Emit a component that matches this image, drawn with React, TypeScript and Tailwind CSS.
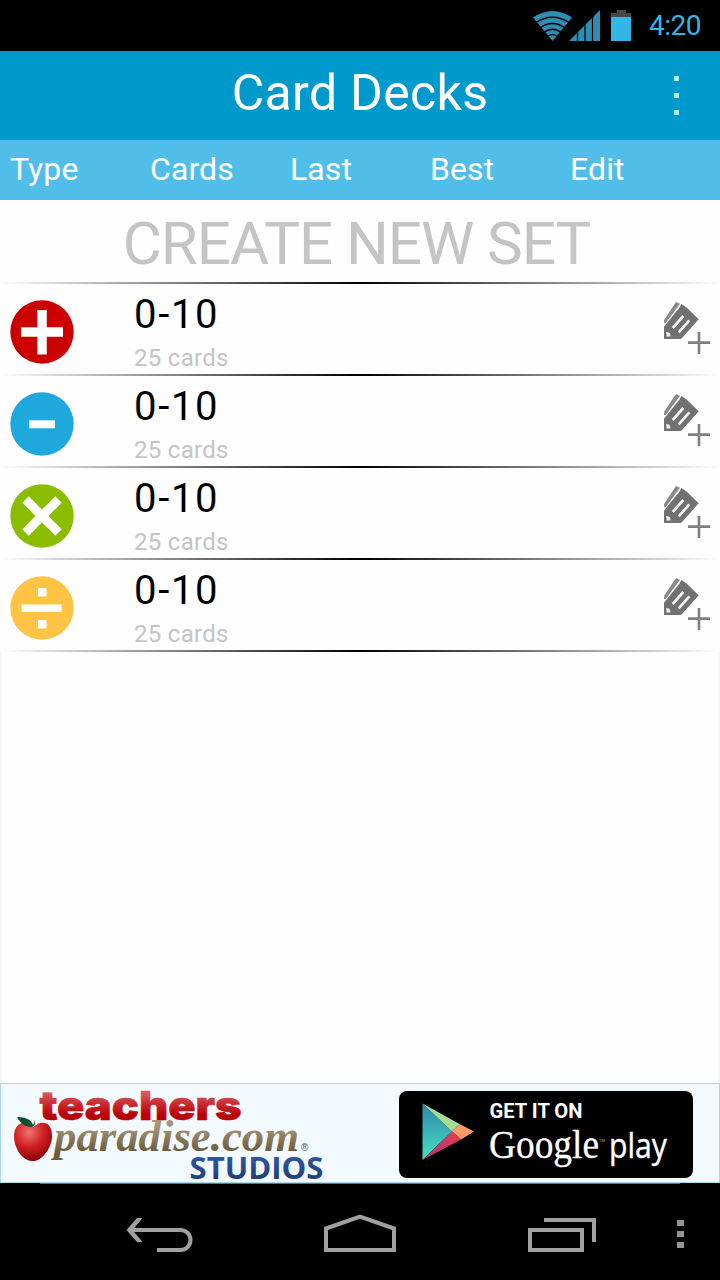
type Operation = 'add' | 'subtract' | 'multiply' | 'divide';

interface Deck {
  operation: Operation;
  range: string;
  cards: number;
}

const COLUMNS = ['Type', 'Cards', 'Last', 'Best', 'Edit'];

const DECKS: Deck[] = [
  { operation: 'add', range: '0-10', cards: 25 },
  { operation: 'subtract', range: '0-10', cards: 25 },
  { operation: 'multiply', range: '0-10', cards: 25 },
  { operation: 'divide', range: '0-10', cards: 25 },
];

function StatusBar() {
  return (
    <div className="flex h-[51px] items-start justify-end bg-black pr-[19px]">
      <svg className="mt-[10px]" width="100" height="32" viewBox="0 0 100 32">
        <path d="M20.5 31 L1 7.5 Q20.5 -5.5 40 7.5 Z" fill="#2d8db3" />
        <g fill="none" stroke="#000" strokeWidth="1.3">
          <path d="M3 13 Q20.5 1.500 38 13" />
          <path d="M7 18.500 Q20.5 8.500 34 18.500" />
          <path d="M11 23 Q20.5 15.500 30 23" />
          <path d="M15 27 Q20.5 22 26 27" />
        </g>
        <path d="M37 31 L68 0 V31 Z" fill="#2d8db3" />
        <path d="M45.5 0V31M53 0V31M60.5 0V31" stroke="#000" strokeWidth="1.2" />
        <path d="M85 0h9v3h5v5H79V3h6z" fill="#474747" />
        <path d="M79 7h20v24H79z" fill="#33b5e5" />
      </svg>
      <span className="ml-[17px] text-[28px] leading-[51px] tracking-[-0.5px] text-[#33b5e5]">4:20</span>
    </div>
  );
}

function OperationIcon({ operation }: { operation: Operation }) {
  return (
    <svg className="mt-4 ml-[10px] shrink-0" width="64" height="64" viewBox="0 0 64 64">
      {operation === 'add' && (
        <>
          <circle cx="32" cy="32" r="31.7" fill="#cc0000" />
          <path d="M32 10V54.5M11 32H53" stroke="#fff" strokeWidth="9.5" />
        </>
      )}
      {operation === 'subtract' && (
        <>
          <circle cx="32" cy="32" r="31.7" fill="#1fa8dc" />
          <path d="M19 32.3H45" stroke="#fff" strokeWidth="8" />
        </>
      )}
      {operation === 'multiply' && (
        <>
          <circle cx="32" cy="32" r="31.7" fill="#8abd00" />
          <path d="M15.5 15.5L48.5 48.5M48.5 15.5L15.5 48.5" stroke="#fff" strokeWidth="9" />
        </>
      )}
      {operation === 'divide' && (
        <>
          <circle cx="32" cy="32" r="31.7" fill="#ffc444" />
          <path d="M11.5 32.3H51.5" stroke="#fff" strokeWidth="7.5" />
          <path d="M28 12h8.5v8.5H28zM28 44h8.5v8.5H28z" fill="#fff" />
        </>
      )}
    </svg>
  );
}

function EditIcon() {
  return (
    <svg className="mt-[18px] mr-[10px] ml-auto shrink-0" width="46" height="52" viewBox="0 0 138 156">
      <path d="M36 0L48 5L6 62L0 64V54Z" fill="#8a8a8a" />
      <path d="M52 6L66 15L104 52L55 107L50 111H0V74L46 17Z" fill="#717171" />
      <path d="M26 78L58 42M44 91L76 55" stroke="#f4f4f4" strokeWidth="8" />
      <path d="M6 90L17 92L20 103L8 104Z" fill="#e8e8e8" />
      <path d="M105 90V156M72 122H138" stroke="#808080" strokeWidth="8" />
    </svg>
  );
}

function Divider() {
  return <div className="h-[2px] bg-linear-to-r from-transparent via-black to-transparent" />;
}

function DeckRow({ deck }: { deck: Deck }) {
  return (
    <>
      <div className="flex h-[90px]">
        <OperationIcon operation={deck.operation} />
        <div className="ml-[60px] pt-[7px]">
          <div className="text-[40px] leading-[47px] tracking-[1.7px] text-black">{deck.range}</div>
          <div className="mt-1 text-[24px] leading-[32px] tracking-[0.3px] text-[#c4c4c4]">{deck.cards} cards</div>
        </div>
        <EditIcon />
      </div>
      <Divider />
    </>
  );
}

function TeachersLogo() {
  return (
    <svg className="overflow-visible" width="340" height="98" viewBox="1 1084 340 98">
      <defs>
        <linearGradient id="red" x1="0" y1="0" x2="0" y2="1">
          <stop offset="0.25" stopColor="#d9575c" />
          <stop offset="0.7" stopColor="#b90007" />
        </linearGradient>
        <linearGradient id="tan" x1="0" y1="0" x2="0" y2="1">
          <stop offset="0.3" stopColor="#a69679" />
          <stop offset="0.8" stopColor="#6c5c3c" />
        </linearGradient>
        <linearGradient id="blue" x1="0" y1="0" x2="0" y2="1">
          <stop offset="0.2" stopColor="#3158a8" />
          <stop offset="0.8" stopColor="#203f7a" />
        </linearGradient>
        <radialGradient id="apple" cx="0.4" cy="0.25" r="0.75">
          <stop offset="0" stopColor="#ed7770" />
          <stop offset="0.5" stopColor="#d12226" />
          <stop offset="1" stopColor="#8d0006" />
        </radialGradient>
      </defs>
      <text x="39.500" y="1119.500" textLength="202" lengthAdjust="spacingAndGlyphs" fill="url(#red)" stroke="url(#red)" strokeWidth="0.6" className="font-['Inter',sans-serif] text-[40px] font-black">
        teachers
      </text>
      <path d="M33 1127C26 1118 14 1123 14 1136C14 1149 23 1161 32 1161C42 1162 53 1147 52 1134C51 1121 41 1120 33 1127Z" fill="url(#apple)" />
      <path d="M17 1117C26 1117 32 1120 33 1125C35 1123 34 1121 35 1120C35 1124 35 1126 32 1127C25 1127 20 1123 17 1117Z" fill="#0c5037" />
      <text x="54" y="1151" textLength="245" lengthAdjust="spacingAndGlyphs" fill="url(#tan)" className="font-['Liberation_Serif',serif] text-[44px] font-bold italic">
        paradise.com
      </text>
      <text x="301" y="1151" fill="#555" className="font-['Liberation_Sans',sans-serif] text-[10px]">
        ®
      </text>
      <text x="189.500" y="1178.500" textLength="134" lengthAdjust="spacingAndGlyphs" fill="url(#blue)" className="font-['Open_Sans',sans-serif] text-[31px] font-bold">
        STUDIOS
      </text>
    </svg>
  );
}

function PlayBadge() {
  return (
    <svg className="mt-[7px] mr-[26px]" width="294" height="87" viewBox="399 1091 294 87">
      <defs>
        <linearGradient id="cyan" x1="0" y1="0" x2="0" y2="1">
          <stop offset="0" stopColor="#2f88ad" />
          <stop offset="1" stopColor="#48e0bf" />
        </linearGradient>
        <linearGradient id="pink" x1="1" y1="0" x2="0" y2="1">
          <stop offset="0" stopColor="#e73d4c" />
          <stop offset="1" stopColor="#a9348e" />
        </linearGradient>
      </defs>
      <rect x="399" y="1091" width="294" height="87" rx="8" fill="#000" />
      <path d="M422.500 1103.500L452 1131.500L422.500 1160Z" fill="url(#cyan)" />
      <path d="M422.500 1103.500L459.500 1124L452 1131.500Z" fill="#a5dc94" />
      <path d="M459.500 1124L474 1131.500L461 1139.500L452 1131.500Z" fill="#fa9b68" />
      <path d="M452 1131.500L461 1139.500L422.500 1160Z" fill="url(#pink)" />
      <text x="489.500" y="1118" textLength="93" lengthAdjust="spacingAndGlyphs" fill="#fff" className="text-[20px] font-bold">
        GET IT ON
      </text>
      <text x="489" y="1158" textLength="110" lengthAdjust="spacingAndGlyphs" fill="#fff" stroke="#fff" strokeWidth="0.3" className="font-['Liberation_Serif',serif] text-[40px]">
        Google
      </text>
      <text x="599" y="1142" fill="#aaa" className="text-[4px]">
        TM
      </text>
      <text x="609" y="1158" textLength="58" lengthAdjust="spacingAndGlyphs" fill="#fff" stroke="#fff" strokeWidth="0.4" className="font-['Open_Sans',sans-serif] text-[34px]">
        play
      </text>
    </svg>
  );
}

function NavigationBar() {
  return (
    <div className="bg-black">
      <div className="mx-10 h-px bg-[#3f78c8]" />
      <div className="flex h-[96px] items-start pt-[30px]">
        <svg className="ml-[126px]" width="68" height="40" viewBox="126 1214 68 40" fill="none" stroke="#a0a0a0" strokeWidth="4">
          <path d="M129 1230H180.500A10 10 0 0 1 180.500 1250H157" />
          <path d="M126.500 1230L137 1218H142.500L132.500 1230L142.500 1242H137Z" fill="#a0a0a0" stroke="none" />
        </svg>
        <svg className="ml-[128px]" width="76" height="40" viewBox="322 1214 76 40" fill="none" stroke="#a0a0a0" strokeWidth="4">
          <path d="M326 1250V1228.500L360 1216.500L394 1228.500V1250Z" />
        </svg>
        <svg className="ml-[128px]" width="72" height="40" viewBox="526 1214 72 40" fill="none" stroke="#a0a0a0" strokeWidth="4">
          <path d="M530 1230H582V1250H530ZM544 1220H594V1242" />
        </svg>
        <div className="mt-[6px] ml-[79px] flex flex-col gap-[5px]">
          <span className="h-[6px] w-[7px] bg-[#949494]" />
          <span className="h-[6px] w-[7px] bg-[#949494]" />
          <span className="h-[6px] w-[7px] bg-[#949494]" />
        </div>
      </div>
    </div>
  );
}

export default function App() {
  return (
    <main className="flex h-[1280px] w-[720px] flex-col overflow-hidden bg-[#fefefe] font-['Roboto',sans-serif]">
      <StatusBar />

      <header className="flex h-[89px] items-start bg-[#0099cc] text-white">
        <div className="w-[60px]" />
        <h1 className="flex-1 text-center text-[50px] leading-[84px] tracking-[0.3px]">Card Decks</h1>
        <button className="mt-[25px] flex w-[60px] flex-col gap-3 pl-[14px]" aria-label="More options">
          <span className="h-[5px] w-[5px] bg-[#b5f0ff]" />
          <span className="h-[5px] w-[5px] bg-[#b5f0ff]" />
          <span className="h-[5px] w-[5px] bg-[#b5f0ff]" />
        </button>
      </header>

      <div className="flex h-[60px] bg-[#50bee8] pl-[10px] text-[32px] leading-[58px] text-white">
        {COLUMNS.map((c) => (
          <div key={c} className="w-[140px] tracking-[0.1px]">{c}</div>
        ))}
      </div>

      <button className="h-[82px] pr-[7px] pt-[4px] text-center text-[60px] leading-[77px] tracking-[-1px] text-[#c4c4c4]">CREATE NEW SET</button>
      <Divider />

      {DECKS.map((deck) => (
        <DeckRow key={deck.operation} deck={deck} />
      ))}

      <div className="flex-1 border-x-2 border-[#f5f5f5]" />

      <div className="flex h-[100px] items-start justify-between border border-[#a8d8e8] bg-[#f3fafd]">
        <TeachersLogo />
        <PlayBadge />
      </div>
      <NavigationBar />
    </main>
  );
}
